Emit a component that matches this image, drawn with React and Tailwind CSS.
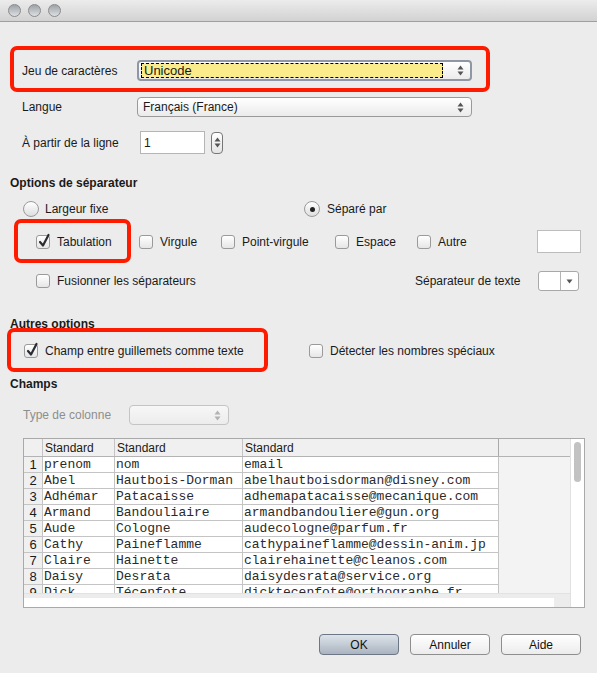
import React from 'react';

const rows = [
  ['prenom', 'nom', 'email'],
  ['Abel', 'Hautbois-Dorman', 'abelhautboisdorman@disney.com'],
  ['Adhémar', 'Patacaisse', 'adhemapatacaisse@mecanique.com'],
  ['Armand', 'Bandouliaire', 'armandbandouliere@gun.org'],
  ['Aude', 'Cologne', 'audecologne@parfum.fr'],
  ['Cathy', 'Paineflamme', 'cathypaineflamme@dessin-anim.jp'],
  ['Claire', 'Hainette', 'clairehainette@cleanos.com'],
  ['Daisy', 'Desrata', 'daisydesrata@service.org'],
  ['Dick', 'Técenfote', 'dicktecenfote@orthographe.fr'],
];

const Arrows = ({ className = '' }) => (
  <svg width="7" height="11" viewBox="0 0 7 11" className={className}>
    <path d="M3.5 0.5 L6.5 4.5 L0.5 4.5 Z" fill="#555" />
    <path d="M3.5 10.5 L6.5 6.5 L0.5 6.5 Z" fill="#555" />
  </svg>
);

const Checkbox = ({ checked }) => (
  <div className="relative w-[14px] h-[14px] rounded-[3px] border border-[#9a9a9a] bg-gradient-to-b from-white to-[#e6e6e6] shrink-0">
    {checked && (
      <svg width="14" height="16" viewBox="0 0 14 16" className="absolute left-[0px] top-[-3px]">
        <path d="M3 9 L6 12.5 L11.5 2" fill="none" stroke="#2b2b33" strokeWidth="2.2" strokeLinecap="round" strokeLinejoin="round" />
      </svg>
    )}
  </div>
);

const Radio = ({ checked }) => (
  <div className="w-[16px] h-[16px] rounded-full border border-[#9a9a9a] bg-gradient-to-b from-white to-[#dedede] flex items-center justify-center shrink-0">
    {checked && <div className="w-[5px] h-[5px] rounded-full bg-[#222]" />}
  </div>
);

const Btn = ({ children, primary }) => (
  <div className={`w-[80px] h-[21px] rounded-[4px] border flex items-center justify-center text-[12px] text-[#111] ${primary ? 'border-[#6d7684] bg-gradient-to-b from-[#dde3ea] to-[#aab4c0]' : 'border-[#8e8e8e] bg-gradient-to-b from-white to-[#ececec]'}`}>
    {children}
  </div>
);

export default function App() {
  return (
    <div className="relative w-[597px] h-[673px] bg-[#ececec] overflow-hidden text-[12px] text-[#1a1a1a]" style={{ fontFamily: '"Liberation Sans", Arial, sans-serif' }}>
      {/* title bar */}
      <div className="h-[22px] bg-gradient-to-b from-[#ececec] to-[#d2d2d2] border-b border-[#9f9f9f] flex items-center gap-[7px] pl-[8px]">
        {[0, 1, 2].map(i => (
          <div key={i} className="w-[13px] h-[13px] rounded-full border border-[#8a8a8a] bg-gradient-to-b from-[#9da2a8] to-[#dde0e3]" />
        ))}
      </div>

      <div className="flex flex-col">
        {/* Jeu de caractères */}
        <div className="mt-[38px] h-[21px] flex items-center">
          <span className="w-[137px] pl-[22px]">Jeu de caractères</span>
          <div className="w-[335px] h-[21px] rounded-[4px] border-2 border-[#8e97a3] bg-gradient-to-b from-white to-[#ececec] flex items-center pl-[2px] pr-[6px]">
            <div className="w-[302px] h-[15px] bg-[#fbec8b] border border-dashed border-black flex items-center pl-[2px] text-[13px] leading-none">Unicode</div>
            <div className="flex-1" />
            <Arrows />
          </div>
        </div>

        {/* Langue */}
        <div className="mt-[16px] h-[20px] flex items-center">
          <span className="w-[137px] pl-[22px]">Langue</span>
          <div className="w-[335px] h-[20px] rounded-[4px] border border-[#9a9a9a] bg-gradient-to-b from-white to-[#ebebeb] flex items-center pl-[5px] pr-[7px]">
            <span className="flex-1">Français (France)</span>
            <Arrows />
          </div>
        </div>

        {/* À partir de la ligne */}
        <div className="mt-[14px] h-[23px] flex items-center">
          <span className="w-[140px] pl-[22px]">À partir de la ligne</span>
          <div className="w-[65px] h-[23px] bg-white border border-[#b5b5b5] flex items-center pl-[3px]">1</div>
          <div className="ml-[6px] w-[12px] h-[22px] rounded-[4px] border border-[#777] bg-gradient-to-b from-white to-[#e4e4e4] flex items-center justify-center">
            <Arrows />
          </div>
        </div>

        {/* Options de séparateur */}
        <div className="mt-[21px] h-[16px] flex items-center pl-[10px] font-semibold">Options de séparateur</div>

        <div className="mt-[10px] h-[16px] flex items-center">
          <div className="ml-[23px] w-[281px] flex items-center gap-[6px]">
            <Radio />
            <span>Largeur fixe</span>
          </div>
          <div className="flex items-center gap-[7px]">
            <Radio checked />
            <span>Séparé par</span>
          </div>
        </div>

        <div className="mt-[13px] h-[23px] flex items-center">
          <div className="ml-[36px] w-[103px] flex items-center gap-[7px]"><Checkbox checked /><span>Tabulation</span></div>
          <div className="w-[82px] flex items-center gap-[7px]"><Checkbox /><span>Virgule</span></div>
          <div className="w-[114px] flex items-center gap-[7px]"><Checkbox /><span>Point-virgule</span></div>
          <div className="w-[82px] flex items-center gap-[7px]"><Checkbox /><span>Espace</span></div>
          <div className="w-[120px] flex items-center gap-[7px]"><Checkbox /><span>Autre</span></div>
          <div className="w-[44px] h-[23px] bg-white border border-[#bdbdbd]" />
        </div>

        <div className="mt-[18px] h-[20px] flex items-center">
          <div className="ml-[36px] w-[379px] flex items-center gap-[7px]"><Checkbox /><span>Fusionner les séparateurs</span></div>
          <span className="w-[123px]">Séparateur de texte</span>
          <div className="w-[41px] h-[20px] rounded-[3px] border border-[#a8a8a8] bg-white flex">
            <div className="w-[22px] border-r border-[#b5b5b5]" />
            <div className="flex-1 flex items-center justify-center">
              <svg width="7" height="5" viewBox="0 0 7 5"><path d="M0.5 0.5 L6.5 0.5 L3.5 4.5 Z" fill="#555" /></svg>
            </div>
          </div>
        </div>

        {/* Autres options */}
        <div className="mt-[25px] h-[16px] flex items-center pl-[10px] font-semibold">Autres options</div>

        <div className="mt-[11px] h-[16px] flex items-center">
          <div className="ml-[24px] w-[285px] flex items-center gap-[7px]"><Checkbox checked /><span>Champ entre guillemets comme texte</span></div>
          <div className="flex items-center gap-[7px]"><Checkbox /><span>Détecter les nombres spéciaux</span></div>
        </div>

        <div className="mt-[17px] h-[16px] flex items-center pl-[10px] font-semibold">Champs</div>

        <div className="mt-[13px] h-[20px] flex items-center">
          <span className="w-[129px] pl-[23px] text-[#8e8e8e]">Type de colonne</span>
          <div className="w-[100px] h-[20px] rounded-[4px] border border-[#c4c4c4] bg-gradient-to-b from-[#f7f7f7] to-[#ececec] flex items-center justify-end pr-[7px]">
            <Arrows className="opacity-40" />
          </div>
        </div>

        {/* table */}
        <div className="mt-[13px] ml-[23px] w-[562px] h-[170px] border border-[#a9a9a9] bg-[#f3f3f3] flex">
          <div className="w-[548px] flex flex-col">
            <div className="flex-1 overflow-hidden bg-[#f3f3f3]">
              <div className="flex h-[18px] bg-[#f0f0f0] border-b border-[#b3b3b3]">
                <div className="w-[19px] border-r border-[#c4c4c4]" />
                <div className="w-[72px] border-r border-[#c4c4c4] pl-[2px] flex items-center">Standard</div>
                <div className="w-[128px] border-r border-[#c4c4c4] pl-[2px] flex items-center">Standard</div>
                <div className="w-[256px] border-r border-[#a9a9a9] pl-[2px] flex items-center">Standard</div>
              </div>
              {rows.map((r, i) => (
                <div key={i} className="flex h-[16px]">
                  <div className="w-[19px] bg-[#f0f0f0] border-r border-b border-[#c4c4c4] flex items-center justify-center text-[13px]">{i + 1}</div>
                  {r.map((c, j) => (
                    <div key={j} className={`${j === 0 ? 'w-[72px]' : j === 1 ? 'w-[128px]' : 'w-[256px]'} bg-white border-r border-b border-[#c4c4c4] pl-[1px] flex items-center text-[13px] leading-none whitespace-nowrap overflow-hidden text-[#2a2a2a]`} style={{ fontFamily: '"Liberation Mono", "Courier New", monospace' }}>{c}</div>
                  ))}
                </div>
              ))}
            </div>
            <div className="h-[14px] bg-[#ececec] border-t border-[#e2e2e2] flex items-end">
              <div className="w-[530px] h-[9px] bg-white" />
            </div>
          </div>
          <div className="w-[14px] bg-white border-l border-[#e0e0e0] flex justify-center pt-[3px]">
            <div className="w-[7px] h-[40px] rounded-full bg-[#c2c2c2]" />
          </div>
        </div>

        {/* buttons */}
        <div className="mt-[26px] flex justify-end gap-[11px] pr-[16px]">
          <Btn primary>OK</Btn>
          <Btn>Annuler</Btn>
          <Btn>Aide</Btn>
        </div>
      </div>

      {/* red annotation boxes */}
      <div className="absolute left-[10px] top-[46px] w-[480px] h-[46px] border-[4px] border-[#fe1b00] rounded-[7px]" />
      <div className="absolute left-[14px] top-[219px] w-[117px] h-[44px] border-[4px] border-[#fe1b00] rounded-[7px]" />
      <div className="absolute left-[7px] top-[328px] w-[261px] h-[44px] border-[4px] border-[#fe1b00] rounded-[7px]" />
    </div>
  );
}
